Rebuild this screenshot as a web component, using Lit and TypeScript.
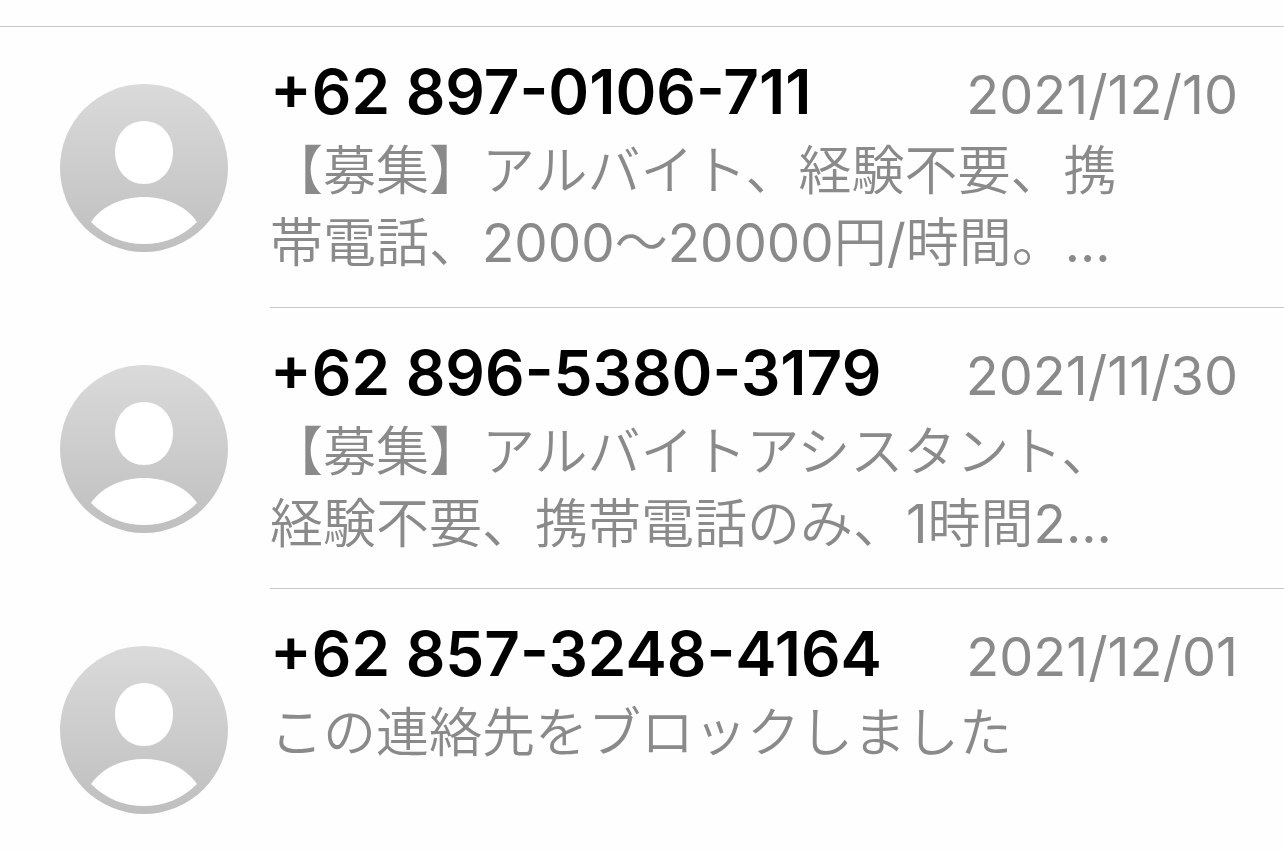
import { LitElement, html, css } from "lit";
import { customElement, property } from "lit/decorators.js";

@customElement("contact-avatar")
class ContactAvatar extends LitElement {
  static styles = css`
    :host { display: block; }
    svg { display: block; width: 168px; height: 168px; }
  `;
  render() {
    return html`<svg viewBox="0 0 168 168" aria-hidden="true">
      <defs>
        <linearGradient id="disc" x1="0" y1="0" x2="0" y2="1">
          <stop offset="0" stop-color="#dadada"></stop>
          <stop offset="1" stop-color="#bfbfbf"></stop>
        </linearGradient>
      </defs>
      <circle cx="84" cy="84" r="84" fill="url(#disc)"></circle>
      <path fill="#fff" d="M84 37C101 37 113 51 113 68C113 87 100 100 84 100C68 100 55 87 55 68C55 51 67 37 84 37Z"></path>
      <path fill="#fff" d="M31 138C42 122 62 113 84 113C106 113 126 122 137 138C122 153 104 160 84 160C64 160 46 153 31 138Z"></path>
    </svg>`;
  }
}

@customElement("message-row")
class MessageRow extends LitElement {
  @property() name = "";
  @property() date = "";
  @property({ attribute: false }) lines: string[] = [];
  @property({ type: Boolean }) last = false;

  static styles = css`
    :host { display: flex; padding-left: 60px; gap: 42px; }
    contact-avatar { flex: none; padding-top: 57px; }
    .body {
      flex: 1;
      min-width: 0;
      min-height: 280px;
      padding-right: 46px;
      border-bottom: 1px solid #c8c8ca;
    }
    .last { border-bottom-color: transparent; }
    .head {
      display: flex;
      justify-content: space-between;
      align-items: baseline;
      padding: 27px 0 2px;
      line-height: 76px;
      white-space: nowrap;
    }
    h2 { margin: 0; font-size: 62px; font-weight: 600; color: #000; }
    time { font-size: 54px; color: #8a8a8a; }
    p {
      margin: 0;
      font-family: Inter, "Noto Sans CJK JP DemiLight", "Noto Sans CJK JP Light", "Noto Sans CJK JP", sans-serif;
      font-size: 53px;
      line-height: 72px;
      color: #8a8a8a;
      white-space: nowrap;
    }
  `;
  render() {
    return html`<contact-avatar></contact-avatar>
      <div class="body ${this.last ? "last" : ""}">
        <div class="head"><h2>${this.name}</h2><time>${this.date}</time></div>
        ${this.lines.map((l) => html`<p>${l}</p>`)}
      </div>`;
  }
}

@customElement("app-root")
class AppRoot extends LitElement {
  static styles = css`
    :host {
      display: block;
      min-height: 100vh;
      box-sizing: border-box;
      padding-top: 26px;
      background: #fefefe;
      overflow: hidden;
      font-family: Inter, "Noto Sans CJK JP", sans-serif;
    }
    main { border-top: 1px solid #c8c8ca; }
  `;
  private messages = [
    { name: "+62 897-0106-711", date: "2021/12/10", lines: ["【募集】アルバイト、経験不要、携", "帯電話、2000〜20000円/時間。..."] },
    { name: "+62 896-5380-3179", date: "2021/11/30", lines: ["【募集】アルバイトアシスタント、", "経験不要、携帯電話のみ、1時間2..."] },
    { name: "+62 857-3248-4164", date: "2021/12/01", lines: ["この連絡先をブロックしました"] },
  ];
  render() {
    return html`<main lang="ja">
      ${this.messages.map((m, i) => html`<message-row .name=${m.name} .date=${m.date} .lines=${m.lines} .last=${i === this.messages.length - 1}></message-row>`)}
    </main>`;
  }
}
